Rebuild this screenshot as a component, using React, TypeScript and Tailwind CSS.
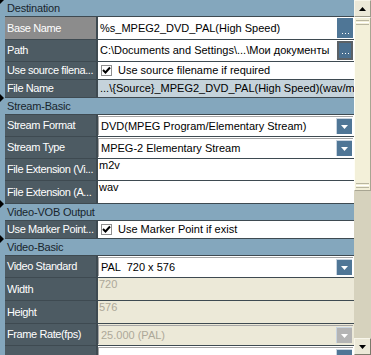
import React from "react";

const SLATE = "bg-[#4d5b63]";

function Strip({ mark }: { mark?: boolean }) {
  return (
    <div className="relative w-[5px] shrink-0 bg-[#84a7bd]">
      {mark && (
        <span className="absolute left-0 top-[-4px] z-10 h-0 w-0 border-y-[4px] border-l-[4px] border-y-transparent border-l-black" />
      )}
    </div>
  );
}

function Category({ title }: { title: string }) {
  return (
    <div className="flex h-[17px] shrink-0">
      <Strip mark />
      <div className="flex flex-1 items-center border-b border-[#3e4a51] bg-[#84a7bd] pl-[2px] tracking-[-0.2px] text-[#18252d]">
        {title}
      </div>
    </div>
  );
}

function Row({
  label,
  h,
  selected,
  children,
}: {
  label: string;
  h: string;
  selected?: boolean;
  children: React.ReactNode;
}) {
  return (
    <div className={`flex shrink-0 ${h}`}>
      <Strip />
      <div className="flex flex-1 border-b border-[#3e4a51]">
        <div
          className={`flex w-[91px] shrink-0 items-center overflow-hidden whitespace-nowrap pl-[2px] tracking-[-0.4px] text-white ${
            selected ? "bg-[#8c8c8c]" : SLATE
          }`}
        >
          {label}
        </div>
        <div className="w-[2px] shrink-0 bg-[#3e4a51]" />
        <div className="flex min-w-0 flex-1">{children}</div>
      </div>
    </div>
  );
}

function Dots() {
  return (
    <div className="flex gap-[2px] pb-[4px]">
      <span className="h-[1px] w-[1px] bg-white" />
      <span className="h-[1px] w-[1px] bg-white" />
      <span className="h-[1px] w-[1px] bg-white" />
    </div>
  );
}

function Edit({ text, framed }: { text: string; framed?: boolean }) {
  return (
    <div className="flex flex-1 bg-white">
      <div className="flex min-w-0 flex-1 items-center overflow-hidden whitespace-nowrap pl-[2px] text-black">
        {text}
      </div>
      {framed ? (
        <div className="my-[1px] mr-[1px] flex w-[16px] bg-[#5b6166] p-[2px]">
          <div className="flex flex-1 items-end justify-center bg-[#4a6f8f]">
            <Dots />
          </div>
        </div>
      ) : (
        <div className="my-[1px] mr-[1px] flex w-[16px] items-end justify-center bg-[#4f7696]">
          <Dots />
        </div>
      )}
    </div>
  );
}

function Check({ text }: { text: string }) {
  return (
    <div className="flex flex-1 items-center bg-white pl-[3px] text-black">
      <div className="mr-[6px] flex h-[11px] w-[11px] items-center justify-center border border-[#8e8e8e] bg-white">
        <svg width="9" height="9" viewBox="0 0 9 9">
          <path d="M1 4 L3.5 6.5 L8 1.5" stroke="#000" strokeWidth="2" fill="none" />
        </svg>
      </div>
      <span className="whitespace-nowrap">{text}</span>
    </div>
  );
}

function Arrow({ color }: { color: string }) {
  return (
    <svg width="7" height="4" viewBox="0 0 7 4">
      <path d="M0 0 H7 L3.5 4 Z" fill={color} />
    </svg>
  );
}

function Combo({ text, disabled }: { text: string; disabled?: boolean }) {
  return (
    <div
      className={`flex flex-1 py-[1px] pr-[1px] ${disabled ? "bg-[#ece9d8]" : "bg-white"}`}
    >
      <div
        className={`flex flex-1 border-l border-t border-[#a5a5a5] ${
          disabled ? "text-[#aca899]" : "text-black"
        }`}
      >
        <div className="flex min-w-0 flex-1 items-center overflow-hidden whitespace-pre pl-[2px]">
          {text}
        </div>
        <div
          className={`my-[1px] mr-[1px] flex w-[16px] items-center justify-center border-l border-t border-[#c8d4e0] ${
            disabled ? "bg-[#b4b4b4]" : "bg-[#4f7696]"
          }`}
        >
          <Arrow color="#fff" />
        </div>
      </div>
    </div>
  );
}

function TopText({ text, disabled }: { text: string; disabled?: boolean }) {
  return (
    <div
      className={`flex-1 pl-[1px] leading-[13px] ${
        disabled ? "bg-[#ece9d8] text-[#aca899]" : "bg-white text-black"
      }`}
    >
      {text}
    </div>
  );
}

function ScrollBar() {
  return (
    <div className="flex w-[17px] shrink-0 flex-col bg-[#d6d2bd]">
      <div className="flex h-[17px] items-center justify-center border border-[#f8f6ea] border-b-[#9c9a8a] border-r-[#9c9a8a] bg-[#ece9d8]">
        <svg width="7" height="4" viewBox="0 0 7 4">
          <path d="M0 4 H7 L3.5 0 Z" fill="#000" />
        </svg>
      </div>
      <div className="flex h-[174px] flex-col justify-between border border-[#fffef6] border-b-[#a8a592] border-r-[#a8a592] bg-[#f3f0d9] px-[1px] py-[2px]">
        <div className="flex flex-col gap-[1px]">
          <span className="h-[1px] bg-[#b9b6a0]" />
          <span className="h-[1px] bg-white" />
          <span className="h-[1px] bg-[#b9b6a0]" />
        </div>
        <div className="flex flex-col gap-[1px]">
          <span className="h-[1px] bg-[#b9b6a0]" />
          <span className="h-[1px] bg-white" />
          <span className="h-[1px] bg-[#b9b6a0]" />
        </div>
      </div>
      <div className="flex-1" />
      <div className="flex h-[17px] items-center justify-center border border-[#f8f6ea] border-b-[#7c7a6c] border-r-[#7c7a6c] bg-[#ece9d8]">
        <Arrow color="#000" />
      </div>
    </div>
  );
}

export default function App() {
  return (
    <div className="flex h-[355px] w-[371px] overflow-hidden bg-[#3e4a51] font-['Liberation_Sans',Arial,sans-serif] text-[11px]">
      <div className="flex min-w-0 flex-1 flex-col overflow-hidden">
        <Category title="Destination" />
        <Row label="Base Name" h="h-[23px]" selected>
          <Edit text="%s_MPEG2_DVD_PAL(High Speed)" />
        </Row>
        <Row label="Path" h="h-[22px]">
          <Edit text="C:\Documents and Settings\...\Мои документы" framed />
        </Row>
        <Row label="Use source filena..." h="h-[18px]">
          <Check text="Use source filename if required" />
        </Row>
        <Row label="File Name" h="h-[18px]">
          <div className="flex flex-1 items-center overflow-hidden whitespace-nowrap bg-[#c5d3db] pl-[2px] text-black">
            ...\{"{Source}"}_MPEG2_DVD_PAL(High Speed)(wav/m2v)
          </div>
        </Row>
        <Category title="Stream-Basic" />
        <Row label="Stream Format" h="h-[22px]">
          <Combo text="DVD(MPEG Program/Elementary Stream)" />
        </Row>
        <Row label="Stream Type" h="h-[22px]">
          <Combo text="MPEG-2 Elementary Stream" />
        </Row>
        <Row label="File Extension (Vi..." h="h-[22px]">
          <TopText text="m2v" />
        </Row>
        <Row label="File Extension (A..." h="h-[23px]">
          <TopText text="wav" />
        </Row>
        <Category title="Video-VOB Output" />
        <Row label="Use Marker Point..." h="h-[18px]">
          <Check text="Use Marker Point if exist" />
        </Row>
        <Category title="Video-Basic" />
        <Row label="Video Standard" h="h-[22px]">
          <Combo text="PAL  720 x 576" />
        </Row>
        <Row label="Width" h="h-[23px]">
          <TopText text="720" disabled />
        </Row>
        <Row label="Height" h="h-[23px]">
          <TopText text="576" disabled />
        </Row>
        <Row label="Frame Rate(fps)" h="h-[22px]">
          <Combo text="25.000 (PAL)" disabled />
        </Row>
        <Row label="" h="h-[22px]">
          <Combo text="" />
        </Row>
      </div>
      <ScrollBar />
    </div>
  );
}
